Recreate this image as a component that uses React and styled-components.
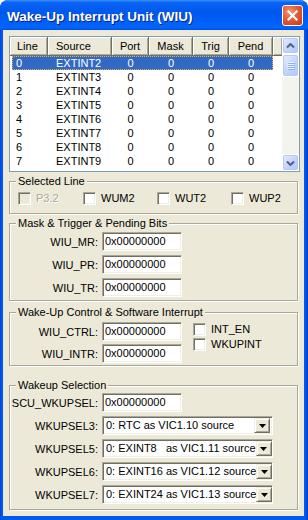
import React from 'react';
import styled, { createGlobalStyle } from 'styled-components';

const GlobalStyle = createGlobalStyle`
  html, body { margin: 0; padding: 0; background: #fff; }
  body {
    font-family: "Liberation Sans", Arial, sans-serif;
    font-size: 11px;
    color: #000;
  }
`;

const Window = styled.div`
  width: 308px;
  height: 520px;
  box-sizing: border-box;
  display: flex;
  flex-direction: column;
  background: linear-gradient(to right, #0831D9 0, #0058EE 1px, #0058EE 306px, #0030B8 308px);
  border-radius: 8px 8px 0 0;
  overflow: hidden;
`;

const TitleBar = styled.div`
  height: 30px;
  flex: none;
  display: flex;
  align-items: flex-start;
  padding: 0 5px 0 7px;
  background: linear-gradient(to bottom, #3D95FF 0%, #0A64F4 8%, #0058EE 40%, #0063FB 86%, #0064FF 92%, #0050E6 100%);
`;

const Title = styled.div`
  flex: 1;
  margin-top: 8px;
  font-size: 13.5px;
  line-height: 17px;
  font-weight: bold;
  color: #fff;
  text-shadow: 1px 1px 0 #0A1E80;
  white-space: nowrap;
`;

const CloseButton = styled.div`
  width: 21px;
  height: 21px;
  margin-top: 5px;
  box-sizing: border-box;
  border: 1px solid #fff;
  border-radius: 3px;
  background: radial-gradient(circle at 35% 30%, #F0957A 0%, #E25B36 45%, #C8391A 100%);
  display: flex;
  align-items: center;
  justify-content: center;
`;

const Body = styled.div`
  flex: 1;
  margin: 0 4px 4px 3px;
  background: #ECE9D8;
  padding: 6px 0 0 6px;
  display: flex;
  flex-direction: column;
`;

/* ---------- list view ---------- */

const ListBox = styled.div`
  width: 291px;
  height: 136px;
  box-sizing: border-box;
  border: 1px solid #7F9DB9;
  background: #fff;
  display: flex;
  overflow: hidden;
  flex: none;
`;

const ListMain = styled.div`
  width: 272px;
  display: flex;
  flex-direction: column;
`;

const HeaderRow = styled.div`
  display: flex;
  height: 19px;
  flex: none;
`;

const HeaderCell = styled.div`
  width: ${p => p.$w}px;
  box-sizing: border-box;
  background: #ECE9D8;
  border-right: 1px solid #716F64;
  border-bottom: 1px solid #716F64;
  box-shadow: inset 1px 1px 0 #fff, inset -1px -1px 0 #ACA899;
  line-height: 18px;
  text-align: ${p => p.$align || 'left'};
  padding-left: ${p => p.$pad || 0}px;
  white-space: nowrap;
  &:last-child { border-right: none; }
`;

const Row = styled.div`
  display: flex;
  height: 14px;
  margin-left: 2px;
  width: 261px;
  box-sizing: border-box;
  line-height: 14px;
  background: ${p => (p.$selected ? '#316AC5' : 'transparent')};
  color: ${p => (p.$selected ? '#fff' : '#000')};
  outline: ${p => (p.$selected ? '1px dotted #F2B145' : 'none')};
  outline-offset: -1px;
`;

const Cell = styled.div`
  width: ${p => p.$w}px;
  box-sizing: border-box;
  text-align: ${p => p.$align || 'left'};
  padding-left: ${p => p.$pad || 0}px;
  white-space: nowrap;
`;

const ScrollBar = styled.div`
  width: 17px;
  flex: none;
  display: flex;
  flex-direction: column;
  background: #F4F3EE;
`;

const ScrollButton = styled.div`
  height: 17px;
  box-sizing: border-box;
  border: 1px solid #fff;
  flex: none;
  display: flex;
  align-items: center;
  justify-content: center;
  & > div {
    width: 100%;
    height: 100%;
    box-sizing: border-box;
    border: 1px solid #B6C9F5;
    border-radius: 2px;
    background: linear-gradient(135deg, #E2EBFE 0%, #C6D6FC 50%, #B4C8F7 100%);
    display: flex;
    align-items: center;
    justify-content: center;
  }
`;

const Thumb = styled(ScrollButton)`
  height: 23px;
`;

const Track = styled.div`
  flex: 1;
`;

/* ---------- group boxes ---------- */

const Group = styled.fieldset`
  width: 289px;
  box-sizing: border-box;
  margin: ${p => p.$mt}px 0 0 0;
  padding: ${p => p.$pt}px 6px ${p => p.$pb}px 6px;
  border: 1px solid #ACA899;
  box-shadow: 1px 1px 0 #fff, inset 1px 1px 0 #fff;
  min-width: 0;
  flex: none;
`;

const Legend = styled.legend`
  padding: 0 2px;
  margin-left: 0;
  line-height: 13px;
  font-size: 11px;
  background: #ECE9D8;
`;

const CheckRow = styled.div`
  display: flex;
  padding-left: 2px;
`;

const CheckItem = styled.div`
  display: flex;
  align-items: center;
  gap: 5px;
  width: ${p => (p.$w ? `${p.$w}px` : 'auto')};
  height: 13px;
  line-height: 13px;
  color: ${p => (p.$disabled ? '#ACA899' : '#000')};
  text-shadow: ${p => (p.$disabled ? '1px 1px 0 #fff' : 'none')};
  white-space: nowrap;
`;

const Box = styled.span`
  width: 13px;
  height: 13px;
  flex: none;
  box-sizing: border-box;
  border: 1px solid;
  border-color: #ACA899 #fff #fff #ACA899;
  box-shadow: inset 1px 1px 0 #716F64, inset -1px -1px 0 #F1EFE2;
  background: ${p => (p.$disabled ? '#ECE9D8' : '#fff')};
`;

const Fields = styled.div`
  display: flex;
  flex-direction: column;
  gap: ${p => p.$gap}px;
`;

const FieldRow = styled.div`
  display: flex;
  align-items: center;
  gap: 4px;
  height: 19px;
`;

const Label = styled.div`
  width: 82px;
  flex: none;
  display: flex;
  justify-content: flex-end;
  white-space: nowrap;
`;

const Edit = styled.div`
  width: 80px;
  height: 19px;
  box-sizing: border-box;
  border: 1px solid;
  border-color: #ACA899 #fff #fff #ACA899;
  box-shadow: inset 1px 1px 0 #716F64, inset -1px -1px 0 #F1EFE2;
  background: #fff;
  padding-left: 2px;
  line-height: 17px;
  white-space: nowrap;
`;

const Combo = styled(Edit)`
  width: 171px;
  display: flex;
  align-items: center;
  padding: 1px 2px 1px 2px;
  white-space: pre;
`;

const ComboText = styled.div`
  flex: 1;
  padding-left: 1px;
  line-height: 15px;
`;

const DropButton = styled.div`
  width: 16px;
  height: 15px;
  flex: none;
  box-sizing: border-box;
  background: #ECE9D8;
  border: 1px solid;
  border-color: #F1EFE2 #716F64 #716F64 #F1EFE2;
  box-shadow: inset 1px 1px 0 #fff, inset -1px -1px 0 #ACA899;
  display: flex;
  align-items: center;
  justify-content: center;
`;

const CtrlLayout = styled.div`
  display: flex;
`;

const CtrlChecks = styled.div`
  display: flex;
  flex-direction: column;
  gap: 2px;
  margin-left: 11px;
  padding-top: 1px;
`;

const Chevron = ({ down }) => (
  <svg width="9" height="6" viewBox="0 0 9 6">
    <path
      d={down ? 'M1 1.5 L4.5 5 L8 1.5' : 'M1 4.5 L4.5 1 L8 4.5'}
      fill="none"
      stroke="#4D6185"
      strokeWidth="2"
    />
  </svg>
);

const Grip = () => (
  <svg width="8" height="8" viewBox="0 0 8 8">
    {[0, 2, 4, 6].map(y => (
      <g key={y}>
        <rect x="0" y={y} width="7" height="1" fill="#EEF4FE" />
        <rect x="1" y={y + 1} width="7" height="1" fill="#8CB0F8" />
      </g>
    ))}
  </svg>
);

const columns = [
  { name: 'Line', w: 38, pad: 7 },
  { name: 'Source', w: 64, pad: 8 },
  { name: 'Port', w: 37, align: 'center' },
  { name: 'Mask', w: 44, align: 'center' },
  { name: 'Trig', w: 36, align: 'center' },
  { name: 'Pend', w: 44, align: 'center' },
];

const rows = [0, 1, 2, 3, 4, 5, 6, 7].map(i => ({ line: i, source: `EXTINT${i + 2}` }));

const selects = [
  { label: 'WKUPSEL3:', value: '0: RTC as VIC1.10 source' },
  { label: 'WKUPSEL5:', value: '0: EXINT8   as VIC1.11 source' },
  { label: 'WKUPSEL6:', value: '0: EXINT16 as VIC1.12 source' },
  { label: 'WKUPSEL7:', value: '0: EXINT24 as VIC1.13 source' },
];

function Check({ label, w, disabled }) {
  return (
    <CheckItem $w={w} $disabled={disabled}>
      <Box $disabled={disabled} />
      {label}
    </CheckItem>
  );
}

function Field({ label, value }) {
  return (
    <FieldRow>
      <Label>{label}</Label>
      <Edit>{value}</Edit>
    </FieldRow>
  );
}

export default function App() {
  return (
    <>
      <GlobalStyle />
      <Window>
        <TitleBar>
          <Title>Wake-Up Interrupt Unit (WIU)</Title>
          <CloseButton>
            <svg width="11" height="11" viewBox="0 0 11 11">
              <path d="M1.5 1.5 L9.5 9.5 M9.5 1.5 L1.5 9.5" stroke="#fff" strokeWidth="2.2" strokeLinecap="square" />
            </svg>
          </CloseButton>
        </TitleBar>
        <Body>
          <ListBox>
            <ListMain>
              <HeaderRow>
                {columns.map(c => (
                  <HeaderCell key={c.name} $w={c.w} $align={c.align} $pad={c.pad}>{c.name}</HeaderCell>
                ))}
                <HeaderCell $w={9} />
              </HeaderRow>
              {rows.map((r, i) => (
                <Row key={r.line} $selected={i === 0}>
                  <Cell $w={36} $pad={4}>{r.line}</Cell>
                  <Cell $w={64} $pad={8}>{r.source}</Cell>
                  <Cell $w={37} $align="center">0</Cell>
                  <Cell $w={44} $align="center">0</Cell>
                  <Cell $w={36} $align="center">0</Cell>
                  <Cell $w={44} $align="center">0</Cell>
                </Row>
              ))}
            </ListMain>
            <ScrollBar>
              <ScrollButton><div><Chevron /></div></ScrollButton>
              <Thumb><div><Grip /></div></Thumb>
              <Track />
              <ScrollButton><div><Chevron down /></div></ScrollButton>
            </ScrollBar>
          </ListBox>

          <Group $mt={3} $pt={4} $pb={8}>
            <Legend>Selected Line</Legend>
            <CheckRow>
              <Check label="P3.2" w={65} disabled />
              <Check label="WUM2" w={74} />
              <Check label="WUT2" w={74} />
              <Check label="WUP2" />
            </CheckRow>
          </Group>

          <Group $mt={3} $pt={2} $pb={3}>
            <Legend>Mask &amp; Trigger &amp; Pending Bits</Legend>
            <Fields $gap={4}>
              <Field label="WIU_MR:" value="0x00000000" />
              <Field label="WIU_PR:" value="0x00000000" />
              <Field label="WIU_TR:" value="0x00000000" />
            </Fields>
          </Group>

          <Group $mt={5} $pt={3} $pb={2}>
            <Legend>Wake-Up Control &amp; Software Interrupt</Legend>
            <CtrlLayout>
              <Fields $gap={3}>
                <Field label="WIU_CTRL:" value="0x00000000" />
                <Field label="WIU_INTR:" value="0x00000000" />
              </Fields>
              <CtrlChecks>
                <Check label="INT_EN" />
                <Check label="WKUPINT" />
              </CtrlChecks>
            </CtrlLayout>
          </Group>

          <Group $mt={13} $pt={1} $pb={5}>
            <Legend>Wakeup Selection</Legend>
            <Fields $gap={4}>
              <Field label="SCU_WKUPSEL:" value="0x00000000" />
              {selects.map(s => (
                <FieldRow key={s.label}>
                  <Label>{s.label}</Label>
                  <Combo>
                    <ComboText>{s.value}</ComboText>
                    <DropButton>
                      <svg width="7" height="4" viewBox="0 0 7 4">
                        <path d="M0 0 H7 L3.5 4 Z" fill="#000" />
                      </svg>
                    </DropButton>
                  </Combo>
                </FieldRow>
              ))}
            </Fields>
          </Group>
        </Body>
      </Window>
    </>
  );
}
